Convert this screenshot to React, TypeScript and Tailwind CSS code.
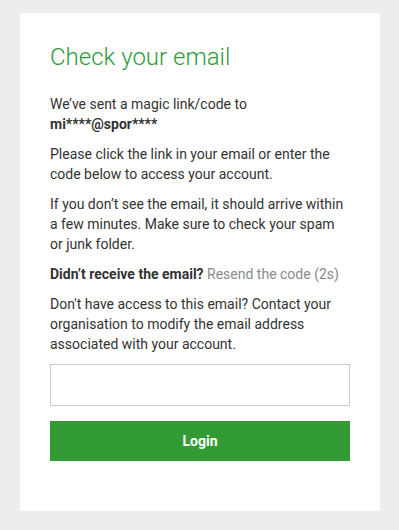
export default function App() {
  return (
    <div
      className="min-h-screen w-full bg-[#ededed] pt-[13px] pl-5 pr-[19px] pb-[19px]"
      style={{ fontFamily: "Roboto, 'Liberation Sans', sans-serif" }}
    >
      <div className="bg-white px-[30px] pt-[28px] pb-[50px] text-[14px] leading-[20px] text-[#333]">
        <h1 className="text-[24px] leading-[32px] font-light text-[#2f9a3a] mb-[21px]">
          Check your email
        </h1>
        <div className="flex flex-col gap-[10px]">
          <p>
            We’ve sent a magic link/code to
            <br />
            <span className="font-bold">mi****@spor****</span>
          </p>
          <p>Please click the link in your email or enter the code below to access your account.</p>
          <p>
            If you don’t see the email, it should arrive within a few minutes. Make sure to check
            your spam or junk folder.
          </p>
          <p>
            <span className="font-bold">Didn’t receive the email?</span>{" "}
            <span className="text-[#8a8a8a]">Resend the code (2s)</span>
          </p>
          <p>
            Don't have access to this email? Contact your organisation to modify the email address
            associated with your account.
          </p>
        </div>
        <input
          type="text"
          className="mt-[10px] block w-full h-[42px] border border-[#cccccc] bg-white px-3 outline-none"
        />
        <button className="mt-[15px] block w-full h-[40px] bg-[#339b33] text-white font-bold text-[14px]">
          Login
        </button>
      </div>
    </div>
  );
}
